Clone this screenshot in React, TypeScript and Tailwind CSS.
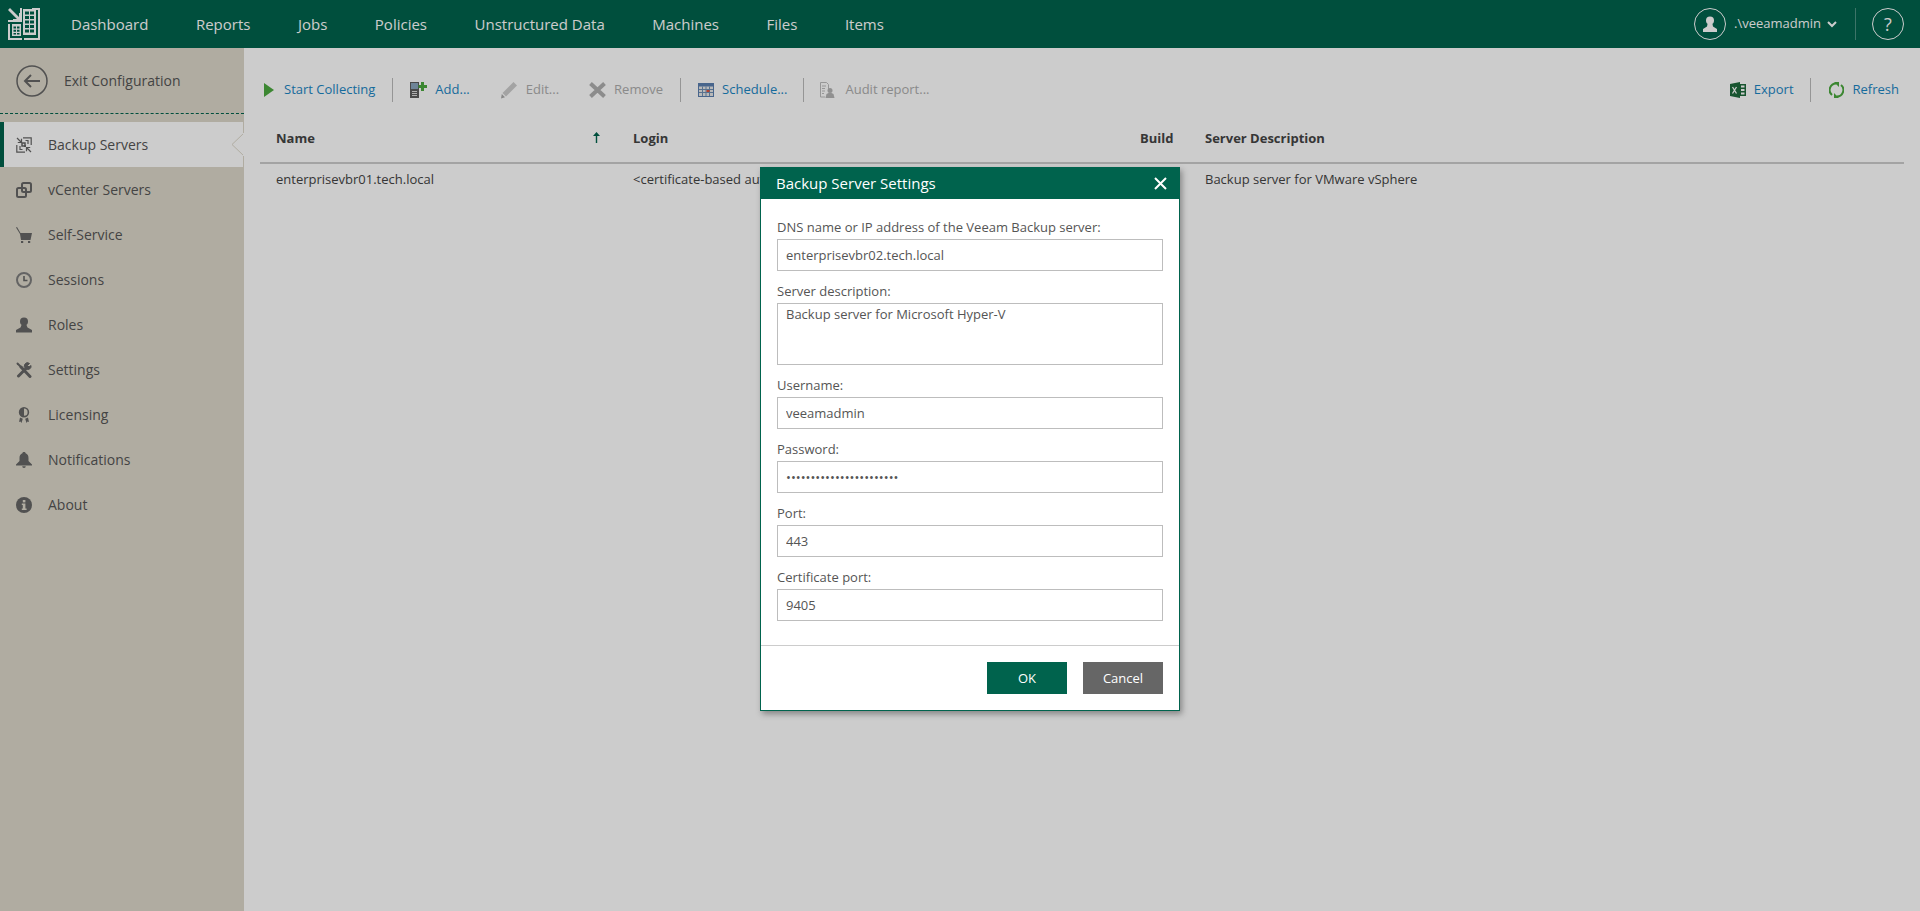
import React from "react";

const font = { fontFamily: '"Open Sans", sans-serif' };

const Logo = () => (
  <svg width="32" height="32" viewBox="0 0 32 32" fill="#fff">
    <path d="M0 2l2-2 9 9V5h2v8H5v-2h4z" />
    <path d="M14 0v13h-2V0zM0 12h14v2H0z" />
    <path d="M24 0h8v32H16v-2h14V2h-6zM0 16h2v14h12v2H0z" />
    <path fillRule="evenodd" d="M15 1h13v26H15zM17 3.500v3h4v-3zm5 0v3h4v-3zM17 8v3h4V8zm5 0v3h4V8zM17 12.500v3h4v-3zm5 0v3h4v-3zM17 17v3h4v-3zm5 0v3h4v-3zM17 21.500v3h4v-3zm5 0v3h4v-3z" />
    <path fillRule="evenodd" d="M4 16h9v12H4zM5.500 18.500v2h2.500v-2zm3.500 0v2h2.500v-2zM5.500 21.800v2h2.500v-2zm3.500 0v2h2.500v-2zM5.500 25v1.500h2.500V25zm3.500 0v1.500h2.500V25z" />
  </svg>
);

const BackupIcon = () => (
  <svg width="16" height="16" viewBox="0 0 16 16" fill="none" stroke="#666" strokeWidth="1.200">
    <path d="M1 1l4.500 4.500M1.800 5.500h3.700V1.800" />
    <path d="M15 15l-4.500-4.500M14.200 10.500h-3.700v3.700" />
    <path d="M7 .8h8.200V8M9 15.200H.8V8" />
    <path d="M6 6h3v3H6z" strokeWidth="1.500" />
    <path d="M9.500 3.500h2.500v3.500M6.500 12.500H4V9" />
    <path d="M8 8h2v2H8z" fill="#666" stroke="none" />
  </svg>
);

const VCenterIcon = () => (
  <svg width="16" height="16" viewBox="0 0 16 16" fill="none" stroke="#666" strokeWidth="2">
    <rect x="1" y="6" width="9" height="9" rx="1.500" />
    <rect x="6" y="1" width="9" height="9" rx="1.500" />
  </svg>
);

const CartIcon = () => (
  <svg width="16" height="16" viewBox="0 0 16 16" fill="#666">
    <path d="M0 .5L1 0l3.500 6H16l-1.500 7H5L4 7z" />
    <rect x="5" y="14" width="2.200" height="2" />
    <rect x="12" y="14" width="2.200" height="2" />
  </svg>
);

const ClockIcon = () => (
  <svg width="16" height="16" viewBox="0 0 16 16" fill="none" stroke="#7d7d7d">
    <circle cx="8" cy="8" r="7" strokeWidth="2" />
    <path d="M8 4v4.500h3.500" strokeWidth="1.600" stroke="#666" />
  </svg>
);

const RoleIcon = () => (
  <svg width="16" height="16" viewBox="0 0 16 16" fill="#666">
    <circle cx="8" cy="4.500" r="4" />
    <path d="M5.500 8h5l1 2.500L16 13v2.500H0V13l4.500-2.500z" />
  </svg>
);

const ToolsIcon = () => (
  <svg width="16" height="16" viewBox="0 0 16 16" fill="none" stroke="#666" strokeLinecap="round">
    <path d="M1.500 1.500l4 4" strokeWidth="2" />
    <path d="M5 5l9 9.500" strokeWidth="3" />
    <path d="M2.500 14l7-7" strokeWidth="3" />
    <path d="M9.500 6.500a3.200 3.200 0 0 1 4-5l-2 2 1.500 1.500 2-1.500a3.300 3.300 0 0 1-5 3.500" fill="#666" strokeWidth="1" />
  </svg>
);

const LicenseIcon = () => (
  <svg width="16" height="16" viewBox="0 0 16 16" fill="#666">
    <path fillRule="evenodd" d="M8 0a5.200 5.200 0 1 1 0 10.400A5.200 5.200 0 0 1 8 0zm0 1.600v7.200a3.600 3.600 0 0 0 0-7.200z" />
    <path d="M4 10.500l2.800 1.200L5.500 16l-1-1.500-1.500.5zM12 10.500l-2.800 1.200 1.300 4.300 1-1.500 1.500.5z" />
  </svg>
);

const BellIcon = () => (
  <svg width="16" height="16" viewBox="0 0 16 16" fill="#666">
    <path d="M8 0c1 0 1.500.5 1.600 1.200C11.500 2 12.500 3.500 12.500 6v3l3.500 3.500v1H0v-1L3.500 9V6c0-2.500 1-4 2.900-4.800C6.500.5 7 0 8 0z" />
    <path d="M6.200 14.200h3.600a1.800 1.800 0 0 1-3.600 0z" />
  </svg>
);

const InfoIcon = () => (
  <svg width="16" height="16" viewBox="0 0 16 16">
    <circle cx="8" cy="8" r="8" fill="#666" />
    <rect x="6.800" y="3" width="2.600" height="2.400" fill="#ddd8ca" />
    <path d="M5.800 6.500h3.600V11.500h1.200V13H5.800v-1.500h1V8H5.800z" fill="#ddd8ca" />
  </svg>
);

const PlayIcon = () => (
  <svg width="10" height="14" viewBox="0 0 10 14" fill="#4ca93f">
    <path d="M0 0l10 7-10 7z" />
  </svg>
);

const AddIcon = () => (
  <svg width="17" height="16" viewBox="0 0 17 16">
    <rect x="0" y="0" width="9" height="16" fill="#5d5d5d" />
    <rect x="1" y="1" width="7" height="6" fill="#8aa5bd" />
    <path d="M2 9h5v1H2zM2 11h5v1H2zM2 13h5v1H2z" fill="#ddd" />
    <path d="M11 0h3v3h3v3h-3v3h-3V6H8.500V3H11z" fill="#4ca93f" />
  </svg>
);

const EditIcon = () => (
  <svg width="18" height="18" viewBox="0 0 18 18" fill="#ccc">
    <path d="M13.500 1L17 4.500 6 15.500 2.500 12z" />
    <path d="M1.800 13L5 16.200 1 17.500z" fill="#aaa" />
  </svg>
);

const RemoveIcon = () => (
  <svg width="17" height="16" viewBox="0 0 17 16" fill="none" stroke="#b0b0b0" strokeWidth="4">
    <path d="M1.500 1.500l14 13M15.500 1.500l-14 13" />
  </svg>
);

const ScheduleIcon = () => (
  <svg width="16" height="14" viewBox="0 0 16 14">
    <rect width="16" height="14" fill="#5a7fb0" />
    <rect x="1" y="3.500" width="14" height="9.500" fill="#e8e8e8" />
    <path d="M1 6.500h14M1 9.500h14M4.500 3.500v9.500M8 3.500v9.500M11.500 3.500v9.500" stroke="#6f8fb5" strokeWidth="1" />
    <rect x="8.500" y="7" width="3" height="2" fill="#e0503c" />
  </svg>
);

const AuditIcon = () => (
  <svg width="15" height="16" viewBox="0 0 15 16" fill="none" stroke="#bdbdbd">
    <path d="M.5.500h6l2 2V7M.5.500v14.500H5" />
    <path d="M2 4h4M2 6.500h3M2 9h3M2 11.500h2" />
    <circle cx="10" cy="8.500" r="2.500" fill="#b5b5b5" stroke="none" />
    <path d="M5.500 16l1-4 2-1h3l2 1 1 4z" fill="#b5b5b5" stroke="none" />
  </svg>
);

const ExcelIcon = () => (
  <svg width="16" height="16" viewBox="0 0 16 16">
    <path d="M0 2l10-2v16L0 14z" fill="#1f6b3c" />
    <path d="M10 2h6v12h-6z" fill="#1f6b3c" />
    <path d="M11 3.500h3.500v2H11zM11 7h3.500v2H11zM11 10.500h3.500v2H11z" fill="#fff" />
    <path d="M2.500 5l4 6.500M6.500 5l-4 6.500" stroke="#fff" strokeWidth="1.300" fill="none" />
  </svg>
);

const RefreshIcon = () => (
  <svg width="15" height="16" viewBox="0 0 15 16" fill="none" stroke="#4ca93f" strokeWidth="2">
    <path d="M3 13A6.500 6.500 0 0 1 7.500 1.500" />
    <path d="M12 3a6.500 6.500 0 0 1-4.500 11.500" />
    <path d="M5 0h5v5zM10 16H5v-5z" fill="#4ca93f" stroke="none" />
  </svg>
);

const navItems = ["Dashboard", "Reports", "Jobs", "Policies", "Unstructured Data", "Machines", "Files", "Items"];

const sideItems = [
  { label: "Backup Servers", icon: <BackupIcon />, active: true },
  { label: "vCenter Servers", icon: <VCenterIcon /> },
  { label: "Self-Service", icon: <CartIcon /> },
  { label: "Sessions", icon: <ClockIcon /> },
  { label: "Roles", icon: <RoleIcon /> },
  { label: "Settings", icon: <ToolsIcon /> },
  { label: "Licensing", icon: <LicenseIcon /> },
  { label: "Notifications", icon: <BellIcon /> },
  { label: "About", icon: <InfoIcon /> },
];

const TopBar = () => (
  <header className="flex h-12 items-center bg-[#00634d] pl-2 pr-4 text-white">
    <Logo />
    <nav className="ml-[31px] flex gap-[47.5px] text-[15px]">
      {navItems.map((n) => (
        <span key={n}>{n}</span>
      ))}
    </nav>
    <div className="ml-auto flex items-center">
      <div className="flex h-8 w-8 items-center justify-center rounded-full border-[1.5px] border-white">
        <svg width="14" height="16" viewBox="0 0 14 16" fill="#fff">
          <circle cx="7" cy="4.500" r="4" />
          <path d="M4.500 8h5l.5 2.500L14 13v3H0v-3l4-2.500z" />
        </svg>
      </div>
      <span className="ml-2 text-[13px]">.\veeamadmin</span>
      <svg className="ml-1.5" width="10" height="7" viewBox="0 0 10 7" fill="none" stroke="#fff" strokeWidth="2">
        <path d="M1 1l4 4 4-4" />
      </svg>
      <div className="ml-[18px] mr-4 h-8 w-px bg-white/30" />
      <div className="flex h-8 w-8 items-center justify-center rounded-full border-[1.5px] border-white text-lg">?</div>
    </div>
  </header>
);

const Sidebar = () => (
  <aside className="w-[244px] shrink-0 bg-[#ddd8ca]">
    <div className="flex h-[66px] items-center border-b border-dashed border-[#00634d] pl-4 pt-px text-sm text-[#555]">
      <svg width="32" height="32" viewBox="0 0 32 32" fill="none" stroke="#666" strokeWidth="1.500">
        <circle cx="16" cy="16" r="15" />
        <path d="M24 16H9M15 10l-6 6 6 6" strokeWidth="2" />
      </svg>
      <span className="ml-4">Exit Configuration</span>
    </div>
    <ul className="mt-2 text-sm text-[#555]">
      {sideItems.map((s) => (
        <li
          key={s.label}
          className={
            s.active
              ? "relative flex h-[45px] items-center border-r border-l-4 border-r-[#ddd8ca] border-l-[#00634d] bg-white pl-3"
              : "flex h-[45px] items-center pl-4"
          }
        >
          {s.icon}
          <span className="ml-4">{s.label}</span>
          {s.active && (
            <svg className="absolute right-[-1px] top-[11px]" width="13" height="23" viewBox="0 0 13 23" fill="#fff" stroke="#ddd8ca">
              <path d="M13 0L1 11.500 13 23z" />
              <path d="M12.500 0v23" stroke="#fff" />
            </svg>
          )}
        </li>
      ))}
    </ul>
  </aside>
);

const ToolBtn = ({ icon, label, off, gap, className }: { icon: React.ReactNode; label: string; off?: boolean; gap?: string; className?: string }) => (
  <div className={"flex items-center " + (gap ?? "gap-2") + " " + (className ?? "")}>
    {icon}
    <span className={off ? "text-[#adadad]" : "text-[#1b86c4]"}>{label}</span>
  </div>
);

const Sep = () => <div className="h-6 w-px bg-[#bbb]" />;

const Content = () => (
  <main className="min-w-0 flex-1 pl-4 pr-4 text-[13px]">
    <div className="flex h-[84px] items-center">
      <ToolBtn icon={<PlayIcon />} label="Start Collecting" gap="gap-2.5" className="ml-1" />
      <div className="mx-[17px]"><Sep /></div>
      <ToolBtn icon={<AddIcon />} label="Add..." />
      <ToolBtn icon={<EditIcon />} label="Edit..." off className="ml-[30px]" />
      <ToolBtn icon={<RemoveIcon />} label="Remove" off className="ml-[30px]" />
      <div className="ml-[17px] mr-[17px]"><Sep /></div>
      <ToolBtn icon={<ScheduleIcon />} label="Schedule..." />
      <div className="mx-4"><Sep /></div>
      <ToolBtn icon={<AuditIcon />} label="Audit report..." off gap="gap-2.5" />
      <div className="ml-auto flex items-center">
        <ToolBtn icon={<ExcelIcon />} label="Export" />
        <div className="ml-4 mr-[18px]"><Sep /></div>
        <ToolBtn icon={<RefreshIcon />} label="Refresh" gap="gap-[9px]" className="mr-[5px]" />
      </div>
    </div>
    <div className="flex h-8 items-center border-b-2 border-[#ccc] pb-4 font-bold text-[#444]">
      <div className="relative w-[373px] pl-4">
        Name
        <svg className="absolute right-[33px] top-[2px]" width="7" height="13" viewBox="0 0 7 13" fill="#00634d">
          <path d="M3.500 1L7 5H4.200v7H2.800V5H0z" />
        </svg>
      </div>
      <div className="w-[507px]">Login</div>
      <div className="w-[33px]">Build</div>
      <div className="pl-8">Server Description</div>
    </div>
    <div className="flex h-8 items-center text-[#444]">
      <div className="w-[373px] pl-4">enterprisevbr01.tech.local</div>
      <div className="w-[540px] whitespace-nowrap">&lt;certificate-based authentication&gt;</div>
      <div className="pl-8">Backup server for VMware vSphere</div>
    </div>
  </main>
);

const inputCls = "block h-8 w-full border border-[#bdbdbd] bg-white px-2 text-[13px] text-[#555] outline-none";

const Field = ({ label, value, type }: { label: string; value: string; type?: string }) => (
  <div className="mt-2 first:mt-0">
    <label className="block text-[13px] leading-6 text-[#555]">{label}</label>
    <input className={inputCls} type={type ?? "text"} value={value} readOnly />
  </div>
);

const Dialog = () => (
  <div className="absolute left-[760px] top-[167px] w-[420px] border border-[#00634d] bg-white shadow-[2px_3px_6px_rgba(0,0,0,0.35)]">
    <div className="flex h-[31px] items-center justify-between bg-[#00634d] pl-[15px] pr-[12px] text-[15px] text-white">
      <span>Backup Server Settings</span>
      <svg width="13" height="13" viewBox="0 0 13 13" stroke="#fff" strokeWidth="2">
        <path d="M1 1l11 11M12 1L1 12" />
      </svg>
    </div>
    <div className="px-4 pt-4 pb-6">
      <Field label="DNS name or IP address of the Veeam Backup server:" value="enterprisevbr02.tech.local" />
      <div className="mt-2">
        <label className="block text-[13px] leading-6 text-[#555]">Server description:</label>
        <textarea
          className="block h-[62px] w-full resize-none border border-[#bdbdbd] bg-white px-2 py-px text-[13px] text-[#555] outline-none"
          value="Backup server for Microsoft Hyper-V"
          readOnly
        />
      </div>
      <Field label="Username:" value="veeamadmin" />
      <Field label="Password:" value="......................." type="password" />
      <Field label="Port:" value="443" />
      <Field label="Certificate port:" value="9405" />
    </div>
    <div className="flex justify-end gap-4 border-t border-[#ccc] p-4 text-[13px] text-white">
      <button className="h-8 w-20 bg-[#00634d] pt-px">OK</button>
      <button className="h-8 w-20 bg-[#666] pt-px">Cancel</button>
    </div>
  </div>
);

export default function App() {
  return (
    <div className="relative flex h-[911px] w-[1920px] flex-col overflow-hidden bg-white" style={font}>
      <TopBar />
      <div className="flex min-h-0 flex-1">
        <Sidebar />
        <Content />
      </div>
      <div className="absolute inset-0 bg-black/20" />
      <Dialog />
    </div>
  );
}
